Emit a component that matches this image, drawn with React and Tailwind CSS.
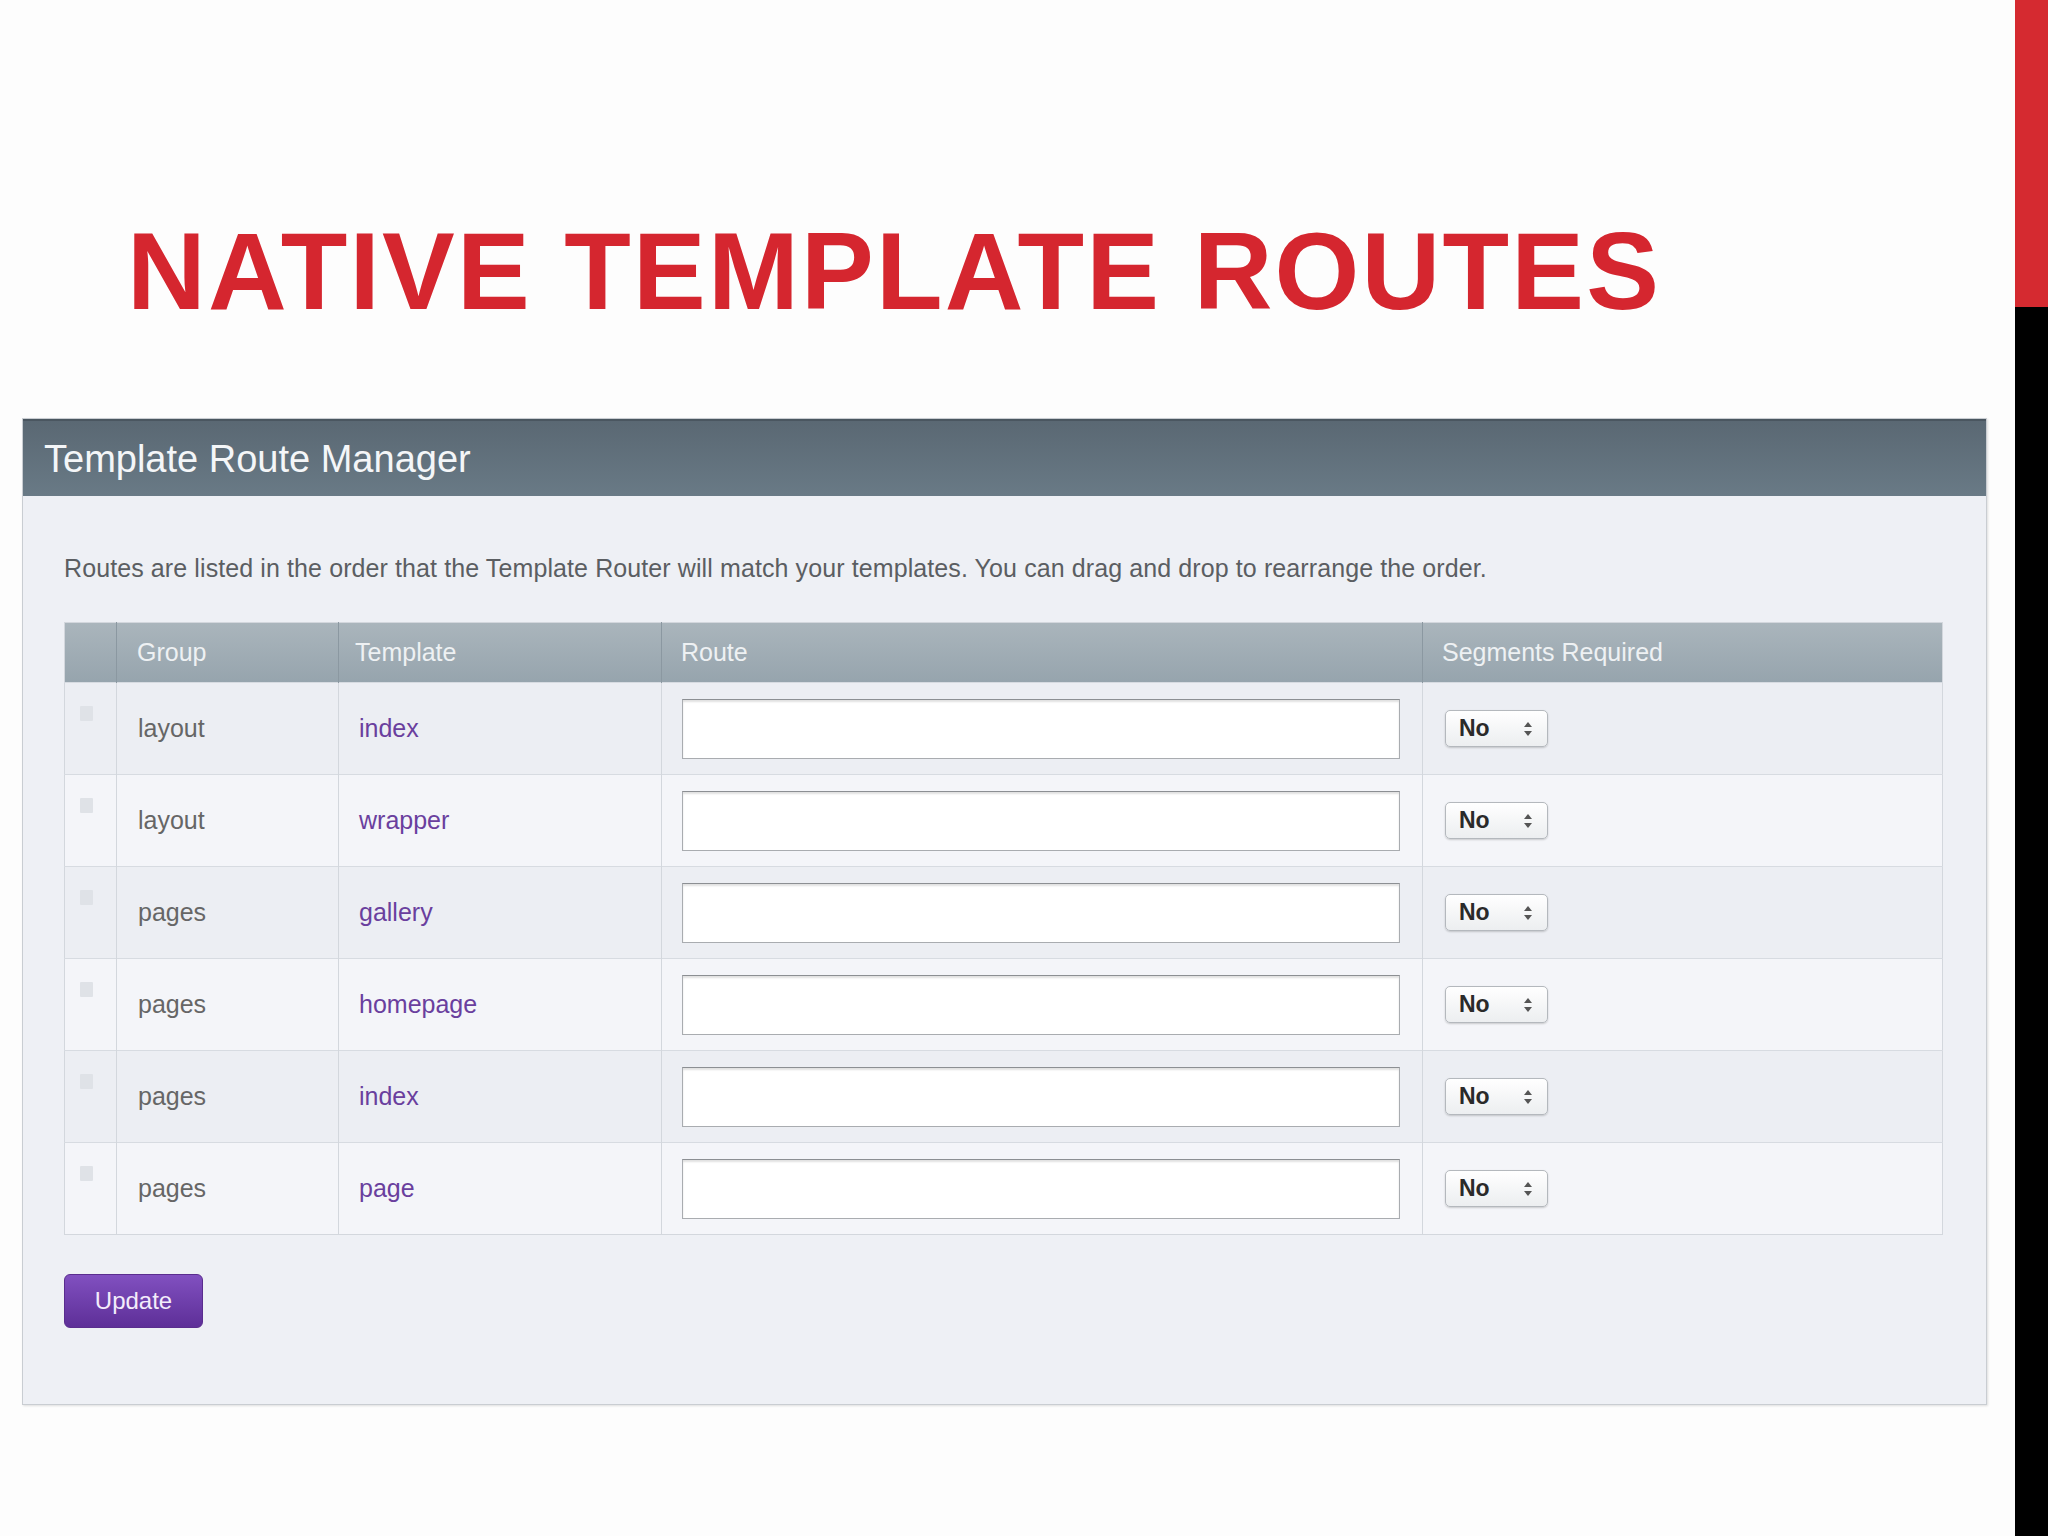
import React from "react";

const rows = [
  { group: "layout", template: "index" },
  { group: "layout", template: "wrapper" },
  { group: "pages", template: "gallery" },
  { group: "pages", template: "homepage" },
  { group: "pages", template: "index" },
  { group: "pages", template: "page" },
];

const Handle = () => (
  <div className="mt-[23px] ml-[15px] h-[15px] w-[13px] rounded-[1px] bg-[#dfe2e7]" />
);

const YesNoSelect = () => (
  <div className="flex h-[37px] w-[103px] items-center justify-between rounded-[5px] border border-[#b4b8bd] bg-gradient-to-b from-white to-[#eceef0] pl-[13px] pr-[14px] shadow-[0_1px_2px_rgba(0,0,0,0.18)]">
    <span className="text-[23px] font-bold leading-none text-[#2a2a2a]">No</span>
    <svg width="10" height="16" viewBox="0 0 10 16">
      <path d="M5 1 L9 6 H1 Z" fill="#555" />
      <path d="M5 15 L9 10 H1 Z" fill="#555" />
    </svg>
  </div>
);

const RouteRow = ({ group, template, index }) => {
  const bg = index % 2 === 0 ? "bg-[#eceef3]" : "bg-[#f4f5f9]";
  return (
    <tr className={`${bg} h-[92px] border-t border-[#d7dbe1]`}>
      <td className="border-r border-[#d3d7dd] align-top">
        <Handle />
      </td>
      <td className="border-r border-[#d3d7dd] pl-[21px] text-[25px] text-[#666]">
        {group}
      </td>
      <td className="border-r border-[#d3d7dd] pl-[20px] text-[25px] text-[#6a3f9e]">
        {template}
      </td>
      <td className="border-r border-[#d3d7dd] pl-[20px] pr-[22px]">
        <div className="h-[60px] w-full border border-[#a9acb0] border-t-[#8c8f93] bg-white shadow-[inset_0_2px_2px_rgba(0,0,0,0.12)]" />
      </td>
      <td className="pl-[22px]">
        <YesNoSelect />
      </td>
    </tr>
  );
};

const TemplateRouteManager = () => {
  return (
    <div className="mt-[92px] border border-[#c9cdd2] bg-[#eef0f5] shadow-[1px_1px_2px_rgba(0,0,0,0.12)]">
      <div className="flex h-[77px] items-center border-t-2 border-[#4a5660] bg-gradient-to-b from-[#5a6873] to-[#697a86] pl-[21px]">
        <span className="text-[38px] leading-none text-[#f4f6f8]">
          Template Route Manager
        </span>
      </div>
      <div className="pl-[41px] pr-[43px] pt-[55px] pb-[76px]">
        <p className="text-[25px] leading-[34px] tracking-[0.1px] text-[#5b5e62]">
          Routes are listed in the order that the Template Router will match your
          templates. You can drag and drop to rearrange the order.
        </p>
        <table className="mt-[37px] w-full table-fixed border border-[#d3d7dd] border-collapse">
          <colgroup>
            <col className="w-[52px]" />
            <col className="w-[222px]" />
            <col className="w-[323px]" />
            <col className="w-[761px]" />
            <col />
          </colgroup>
          <thead>
            <tr className="h-[60px] bg-gradient-to-b from-[#aab5bc] to-[#96a4ad] text-left">
              <th className="border-r border-[#8b98a1]"></th>
              <th className="border-r border-[#8b98a1] pl-[20px] text-[25px] font-normal text-[#eef1f3]">
                Group
              </th>
              <th className="border-r border-[#8b98a1] pl-[16px] text-[25px] font-normal text-[#eef1f3]">
                Template
              </th>
              <th className="border-r border-[#8b98a1] pl-[19px] text-[25px] font-normal text-[#eef1f3]">
                Route
              </th>
              <th className="pl-[19px] text-[25px] font-normal text-[#eef1f3]">
                Segments Required
              </th>
            </tr>
          </thead>
          <tbody>
            {rows.map((row, i) => (
              <RouteRow key={i} index={i} {...row} />
            ))}
          </tbody>
        </table>
        <button className="mt-[39px] flex h-[54px] w-[139px] items-center justify-center rounded-[6px] border border-[#5a2d8e] bg-gradient-to-b from-[#8150c0] to-[#5e2f98] text-[24px] text-[#f3ecfb]">
          Update
        </button>
      </div>
    </div>
  );
};

export default function App() {
  return (
    <div
      className="flex h-[1536px] w-[2048px] bg-[#fdfdfd]"
      style={{ fontFamily: '"Liberation Sans", Arial, sans-serif' }}
    >
      <div className="flex-1 pl-[22px] pr-[28px]">
        <h1 className="mt-[217px] pl-[105px] text-[109px] font-bold leading-none text-[#d5262f] tracking-[2.2px]">
          NATIVE TEMPLATE ROUTES
        </h1>
        <TemplateRouteManager />
      </div>
      <div className="flex w-[33px] flex-col">
        <div className="h-[307px] bg-[#d52a30]" />
        <div className="flex-1 bg-black" />
      </div>
    </div>
  );
}
